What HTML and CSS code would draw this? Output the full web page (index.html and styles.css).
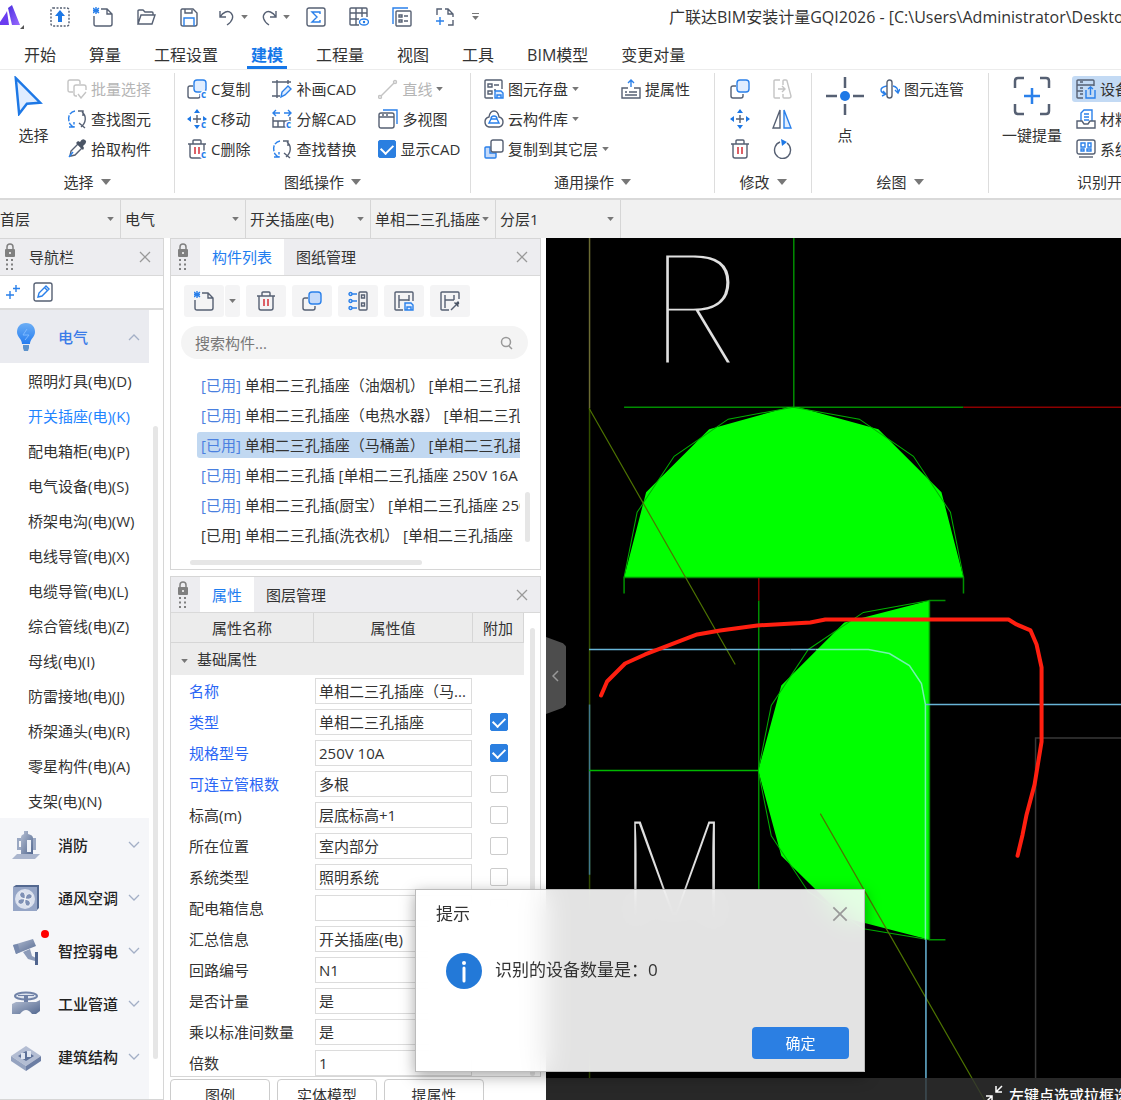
FILE: index.html
```html
<!DOCTYPE html>
<html lang="zh-CN">
<head>
<meta charset="utf-8">
<title>广联达BIM安装计量GQI2026</title>
<link rel="stylesheet" href="styles.css">
</head>
<body>
<svg class="defs" aria-hidden="true">
  <symbol id="i-tri" viewBox="0 0 10 6"><path class="tri" d="M0 0h10L5 6z"/></symbol>
  <symbol id="i-close" viewBox="0 0 12 12"><path class="x" d="M1 1l10 10M11 1L1 11"/></symbol>
  <symbol id="i-chev" viewBox="0 0 12 8"><path class="chev" d="M1 1l5 5 5-5"/></symbol>
  <symbol id="i-up" viewBox="0 0 20 20"><rect class="g" x="1" y="1" width="18" height="18" rx="2" stroke-dasharray="2 1.5"/><path class="fb" d="M10 3l5 6h-3v6H8V9H5z"/></symbol>
  <symbol id="i-new" viewBox="0 0 20 20"><path class="g" d="M8 2h6l5 5v10q0 2-2 2H3q-2 0-2-2V9M14 2v5h5"/><path class="b" d="M0 1l6 5M6 1L0 6M3 0v7M0 3.500h6"/></symbol>
  <symbol id="i-open" viewBox="0 0 20 20"><path class="g" d="M2 17V4q0-1 1-1h4l2 2h7q1 0 1 1v2M2 17L5 8h14l-3 9z"/></symbol>
  <symbol id="i-save" viewBox="0 0 20 20"><path class="g" d="M3 2h11l4 4v11q0 2-2 2H4q-2 0-2-2V3zM6 2v4h7V3"/><path class="b" d="M5 19v-8h10v8"/></symbol>
  <symbol id="i-undo" viewBox="0 0 20 20"><path class="g" d="M3 4v6h6M3 10C6 5 11 3 14 6s2 8-4 12"/></symbol>
  <symbol id="i-redo" viewBox="0 0 20 20"><path class="g" d="M17 4v6h-6M17 10C14 5 9 3 6 6s-2 8 4 12"/></symbol>
  <symbol id="i-sum" viewBox="0 0 20 20"><rect class="g" x="1" y="1" width="18" height="18" rx="2"/><path class="b" stroke-width="1.700" d="M14 7V5H6l5 5-5 5h8v-2"/></symbol>
  <symbol id="i-grid" viewBox="0 0 20 20"><path class="g" d="M10 18H2q-1 0-1-1V2q0-1 1-1h15q1 0 1 1v8M1 6h17M1 12h9M7 1v17M13 1v9"/><ellipse class="b" cx="15" cy="15" rx="4.500" ry="3"/><circle class="fb" cx="15" cy="15" r="1.200"/></symbol>
  <symbol id="i-list" viewBox="0 0 20 20"><path class="b" d="M1 17V1h15"/><rect class="g" x="4" y="4" width="15" height="15" rx="1"/><path class="g" d="M7 8h3v2H7zM7 13h3v2H7zM12 9h4M12 14h4"/></symbol>
  <symbol id="i-plusdoc" viewBox="0 0 20 20"><path class="g" d="M2 8V2h5M10 2h3l5 5v3M18 13v5h-5M13 2v5h5"/><path class="b" d="M5 10v8M1 14h8"/></symbol>
  <symbol id="i-cursor" viewBox="0 0 28 36"><path d="M3 2l22 22-12 1-7 9z" fill="#e0edff" stroke="#1d78e6" stroke-width="2.200"/></symbol>
  <symbol id="i-batch" viewBox="0 0 20 20"><path class="l" d="M6 13H3q-2 0-2-2V3q0-2 2-2h8q2 0 2 2v2M10 17H9q-2 0-2-2V8q0-2 2-2h8q2 0 2 2v3M11 15l3 4 5-6"/></symbol>
  <symbol id="i-find" viewBox="0 0 20 20"><path class="b" d="M8 2C2 3 0 9 3 15l3 3M2 18h5v-5" stroke-dasharray="6 1.500"/><path class="g" d="M11 2h5v5M15 3c5 4 4 11-1 15M12 14l6 5"/></symbol>
  <symbol id="i-drop" viewBox="0 0 20 20"><path class="g fw" d="M3 17l1-5 7-7 4 4-7 7-4 1z"/><path class="fg" d="M9 4l7 7 1-2-1-2q5-4 2-6t-5 2l-2-1z"/><path class="b" d="M2 18l4-5"/></symbol>
  <symbol id="i-copy" viewBox="0 0 20 20"><path class="g" d="M6 7H3Q1 7 1 9v8q0 2 2 2h8q2 0 2-2v-2"/><rect class="b lb" x="7" y="1" width="12" height="12" rx="3"/></symbol>
  <symbol id="i-move" viewBox="0 0 20 20"><path class="g" d="M10 6v8M6 10h8"/><path class="b" d="M10 1v3M10 16v3M1 10h3M16 10h3"/><path class="fb" d="M10 0l3 4H7zM10 20l3-4H7zM0 10l4-3v6zM20 10l-4-3v6z"/></symbol>
  <symbol id="i-trash" viewBox="0 0 20 20"><path class="g" d="M1 5h18M6 5V2q0-1 1-1h6q1 0 1 1v3M3 5v12q0 2 2 2h10q2 0 2-2V5"/><path d="M8 8v7M12 8v7" stroke="#d8454c" stroke-width="1.700"/></symbol>
  <symbol id="i-draw" viewBox="0 0 20 20"><path class="g" d="M5 1v18M0 3h19M0 17h8M16 1v4"/><path class="b lb" d="M9 18l1-5 6-6 3 3-6 6z"/></symbol>
  <symbol id="i-split" viewBox="0 0 20 20"><path class="g" d="M1 8v10h13M1 12h17V8M6 12v6M12 12v6"/><path class="b" d="M1 4h7M4 1L1 4l3 3M12 4h7M16 1l3 3-3 3"/></symbol>
  <symbol id="i-line" viewBox="0 0 20 20"><path class="l" d="M3 17L16 4"/><circle class="l fw" cx="2" cy="18" r="1.500"/><circle class="l fw" cx="17" cy="3" r="1.500"/></symbol>
  <symbol id="i-views" viewBox="0 0 20 20"><path class="b" d="M5 1h14v14"/><rect class="g" x="1" y="4" width="15" height="15" rx="2"/><path class="g" d="M1 8h15M4 6h2M8 6h2"/></symbol>
  <symbol id="i-store" viewBox="0 0 20 20"><path class="g" d="M9 19H2q-1 0-1-1V2q0-1 1-1h15q1 0 1 1v8M4 5h4v3H4zM10 6h5M4 12h4v3H4zM10 11h2"/><path class="b lb" d="M11 12h6l2 2v5h-8zM13 19v-3h4v3"/></symbol>
  <symbol id="i-cloud" viewBox="0 0 20 20"><path class="g" d="M5 18Q1 17 1 13t4-5q1-6 5-6t5 6q4 1 4 5t-4 5z"/><path class="b" d="M7 10q0-3 3-3t3 3zM5 14h10l-2-4H7z"/></symbol>
  <symbol id="i-floor" viewBox="0 0 20 20"><path class="b lb" d="M6 8H2q-1 0-1 1v9q0 1 1 1h9q1 0 1-1v-4H6z"/><rect class="g fw" x="7" y="1" width="12" height="12" rx="2"/></symbol>
  <symbol id="i-attr" viewBox="0 0 20 20"><path class="b" d="M10 8V1M7 4l3-3 3 3"/><path class="g" d="M7 9H1v10h18V9h-6M4 13h2M8 13h8M4 16h12"/></symbol>
  <symbol id="i-mirror" viewBox="0 0 20 20"><path class="g" d="M8 1v18H1z"/><path class="b lb" d="M12 1v18h7z"/></symbol>
  <symbol id="i-stretch" viewBox="0 0 20 20"><path class="l" d="M8 1H3Q2 1 2 2v16q0 1 1 1h5M6 10h7M10 7l3 3-3 3M11 6V2q0-1 1-1h2q1 0 1 1l4 15q0 2-2 2h-5q-1 0-1-1v-3"/></symbol>
  <symbol id="i-rotate" viewBox="0 0 20 20"><path class="g" d="M15 4a8 8.500 0 1 1-7-1"/><path class="fb" d="M9 0l6 3-5 4z"/></symbol>
  <symbol id="i-point" viewBox="0 0 38 38"><path class="g w2" d="M19 0v11M19 27v11M0 19h11M27 19h11"/><circle class="fb" cx="19" cy="19" r="5"/></symbol>
  <symbol id="i-pipe" viewBox="0 0 20 20"><path class="b" d="M7 7q-6 1-6 4t5 4M3 12l3 3-4 2M13 7q5 1 5 6M15 11l3 3 2-4"/><rect class="g fw" x="7" y="1" width="5" height="18" rx="2.500"/></symbol>
  <symbol id="i-scan" viewBox="0 0 38 38"><path class="g w2" d="M2 11V4q0-3 3-3h6M27 1h6q3 0 3 3v7M36 27v7q0 3-3 3h-6M11 37H5q-3 0-3-3v-7"/><path class="b w2" d="M19 11v16M11 19h16"/></symbol>
  <symbol id="i-device" viewBox="0 0 20 20"><path class="g" d="M7 19H2q-1 0-1-1V2q0-1 1-1h15q1 0 1 1v5M1 6h17M1 12h6M4 3h3M4 9h3M4 15h3"/><path class="b" d="M10 11v8h9v-8M14.500 16V8M12 10l2.500-2 2.500 2"/></symbol>
  <symbol id="i-mater" viewBox="0 0 20 20"><path class="b" d="M5 12V4l3-3h8v11M8 5h5M8 8h5M8 11h5"/><path class="g" d="M1 12h5l2 3h4l2-3h5v7H1z"/></symbol>
  <symbol id="i-system" viewBox="0 0 20 20"><rect class="g" x="1" y="1" width="18" height="14" rx="2"/><path class="b" d="M5 4h4v4H5zM12 4h3v4h-3zM5 10h3v2H5zM11 10h4v2h-4z"/><path class="g" d="M3 18h14"/></symbol>
  <symbol id="i-lock" viewBox="0 0 12 28"><path d="M3 6V4q0-3 3-3t3 3v2" fill="none" stroke="#808080" stroke-width="1.500"/><rect class="fk" x="1" y="6" width="10" height="8" rx="1"/><path d="M6 9v2" stroke="#fff" stroke-width="1.500"/><path class="fk" d="M2 16h2v2H2zM7 16h2v2H7zM2 20.500h2v2H2zM7 20.500h2v2H7zM2 25h2v2H2zM7 25h2v2H7z"/></symbol>
  <symbol id="i-spark" viewBox="0 0 14 14"><path class="b" d="M4 6v8M0 10h8M10 0v7M7 3.500h7"/></symbol>
  <symbol id="i-edit" viewBox="0 0 20 20"><rect class="g" x="1" y="1" width="18" height="18" rx="2"/><path class="b" d="M5 15l1-4 7-7 3 3-7 7zM12 6l2 2"/></symbol>
  <symbol id="i-tree" viewBox="0 0 20 20"><path class="b" d="M4 3h5M4 10h5M4 17h5"/><circle class="b" cx="2.500" cy="3" r="1.500"/><circle class="b" cx="2.500" cy="10" r="1.500"/><circle class="b" cx="2.500" cy="17" r="1.500"/><rect class="g" x="11" y="1" width="8" height="18" rx="1"/><path class="g" d="M13.500 4h3v3h-3zM13.500 12h3v3h-3z"/></symbol>
  <symbol id="i-hsave" viewBox="0 0 20 20"><path class="g" d="M9 19H2q-1 0-1-1V2q0-1 1-1h16q1 0 1 1v8M5 4v13M5 9h10M15 4v6"/><path class="b lb" d="M11 12h6l2 2v5h-8zM13 19v-3h4v3"/></symbol>
  <symbol id="i-hpick" viewBox="0 0 20 20"><path class="g" d="M9 19H2q-1 0-1-1V2q0-1 1-1h16q1 0 1 1v6M5 4v13M5 9h9M14 4v5"/><path class="g" d="M11 19l5-5"/><path class="fg" d="M14 12l1-1 1 1q2-3 3-1t-1 3l1 1-1 1z"/></symbol>
  <symbol id="i-search" viewBox="0 0 14 14"><circle cx="6" cy="6" r="4.500" fill="none" stroke="#999" stroke-width="1.500"/><path d="M9 10l3 3" stroke="#999" stroke-width="1.500"/></symbol>
  <linearGradient id="steel" x1="0" x2="1" y1="0" y2="1"><stop offset="0" stop-color="#b5bfd3"/><stop offset="1" stop-color="#536890"/></linearGradient>
  <linearGradient id="glow" x2="0" y2="1"><stop offset="0" stop-color="#6caef5"/><stop offset="1" stop-color="#267df0"/></linearGradient>
  <linearGradient id="brand" x2="1" y2="1"><stop offset="0" stop-color="#4b2fe0"/><stop offset="1" stop-color="#9a6bff"/></linearGradient>
</svg>

<header class="titlebar">
  <svg class="logo" viewBox="0 0 24 24"><path d="M0 20L7 6l2 14zM-2 20L6 8l0 12z" fill="#6a3cf0"/><path d="M8 3l4-3 8 20h-8z" fill="url(#brand)"/><path d="M24 20v4h-4z" fill="#555"/></svg>
  <nav class="quick" aria-label="快速访问">
    <button aria-label="上传"><svg><use href="#i-up"/></svg></button>
    <button aria-label="新建"><svg><use href="#i-new"/></svg></button>
    <button aria-label="打开"><svg><use href="#i-open"/></svg></button>
    <button aria-label="保存"><svg><use href="#i-save"/></svg></button>
    <button aria-label="撤销" class="has-menu"><svg><use href="#i-undo"/></svg><svg class="t"><use href="#i-tri"/></svg></button>
    <button aria-label="重做" class="has-menu"><svg><use href="#i-redo"/></svg><svg class="t"><use href="#i-tri"/></svg></button>
    <button aria-label="汇总"><svg><use href="#i-sum"/></svg></button>
    <button aria-label="表格"><svg><use href="#i-grid"/></svg></button>
    <button aria-label="清单"><svg><use href="#i-list"/></svg></button>
    <button aria-label="添加"><svg><use href="#i-plusdoc"/></svg></button>
    <button aria-label="更多" class="more"><svg class="t"><use href="#i-tri"/></svg></button>
  </nav>
  <h1>广联达BIM安装计量GQI2026 - [C:\Users\Administrator\Desktop</h1>
</header>

<nav class="tabs">
  <a href="#">开始</a><a href="#">算量</a><a href="#">工程设置</a><a href="#" class="on">建模</a><a href="#">工程量</a><a href="#">视图</a><a href="#">工具</a><a href="#">BIM模型</a><a href="#">变更对量</a>
</nav>

<section class="ribbon">
  <div class="group g-select">
    <div class="tools">
      <button class="big"><svg class="cursor"><use href="#i-cursor"/></svg>选择</button>
      <div class="col">
        <button disabled><svg><use href="#i-batch"/></svg>批量选择</button>
        <button><svg><use href="#i-find"/></svg>查找图元</button>
        <button><svg><use href="#i-drop"/></svg>拾取构件</button>
      </div>
    </div>
    <button class="caption">选择<svg class="t"><use href="#i-tri"/></svg></button>
  </div>
  <div class="group g-sheet">
    <div class="tools">
      <div class="col">
        <button><svg><use href="#i-copy"/><text class="sub" x="14" y="19">c</text></svg>C复制</button>
        <button><svg><use href="#i-move"/><text class="sub" x="14" y="19">c</text></svg>C移动</button>
        <button><svg><use href="#i-trash"/><text class="sub" x="14" y="19">c</text></svg>C删除</button>
      </div>
      <div class="col">
        <button><svg><use href="#i-draw"/></svg>补画CAD</button>
        <button><svg><use href="#i-split"/><text class="sub" x="14" y="19">c</text></svg>分解CAD</button>
        <button><svg><use href="#i-find"/></svg>查找替换</button>
      </div>
      <div class="col">
        <button disabled><svg><use href="#i-line"/></svg>直线<svg class="t s"><use href="#i-tri"/></svg></button>
        <button><svg><use href="#i-views"/></svg>多视图</button>
        <label><input type="checkbox" checked>显示CAD</label>
      </div>
    </div>
    <button class="caption">图纸操作<svg class="t"><use href="#i-tri"/></svg></button>
  </div>
  <div class="group g-common">
    <div class="tools">
      <div class="col">
        <button><svg><use href="#i-store"/></svg>图元存盘<svg class="t s"><use href="#i-tri"/></svg></button>
        <button><svg><use href="#i-cloud"/></svg>云构件库<svg class="t s"><use href="#i-tri"/></svg></button>
        <button class="deep"><svg><use href="#i-floor"/></svg>复制到其它层<svg class="t s"><use href="#i-tri"/></svg></button>
      </div>
      <div class="col">
        <button><svg><use href="#i-attr"/></svg>提属性</button>
      </div>
    </div>
    <button class="caption">通用操作<svg class="t"><use href="#i-tri"/></svg></button>
  </div>
  <div class="group g-edit">
    <div class="tools">
      <div class="col">
        <button aria-label="复制"><svg><use href="#i-copy"/></svg></button>
        <button aria-label="移动"><svg><use href="#i-move"/></svg></button>
        <button aria-label="删除"><svg><use href="#i-trash"/></svg></button>
      </div>
      <div class="col">
        <button aria-label="拉伸" disabled><svg><use href="#i-stretch"/></svg></button>
        <button aria-label="镜像"><svg><use href="#i-mirror"/></svg></button>
        <button aria-label="旋转"><svg><use href="#i-rotate"/></svg></button>
      </div>
    </div>
    <button class="caption">修改<svg class="t"><use href="#i-tri"/></svg></button>
  </div>
  <div class="group g-draw">
    <div class="tools">
      <button class="big"><svg><use href="#i-point"/></svg>点</button>
      <div class="col"><button><svg><use href="#i-pipe"/></svg>图元连管</button></div>
    </div>
    <button class="caption">绘图<svg class="t"><use href="#i-tri"/></svg></button>
  </div>
  <div class="group g-detect">
    <div class="tools">
      <button class="big"><svg><use href="#i-scan"/></svg>一键提量</button>
      <div class="col">
        <button class="on"><svg><use href="#i-device"/></svg>设备</button>
        <button><svg><use href="#i-mater"/></svg>材料</button>
        <button><svg><use href="#i-system"/></svg>系统</button>
      </div>
    </div>
    <button class="caption">识别开</button>
  </div>
</section>

<section class="combos">
  <label><select aria-label="楼层"><option>首层</option></select><svg class="t s"><use href="#i-tri"/></svg></label>
  <label><select aria-label="专业"><option>电气</option></select><svg class="t s"><use href="#i-tri"/></svg></label>
  <label><select aria-label="构件类型"><option>开关插座(电)</option></select><svg class="t s"><use href="#i-tri"/></svg></label>
  <label><select aria-label="构件"><option>单相二三孔插座</option></select><svg class="t s"><use href="#i-tri"/></svg></label>
  <label><select aria-label="分层"><option>分层1</option></select><svg class="t s"><use href="#i-tri"/></svg></label>
</section>

<main class="work">
  <aside class="nav panel">
    <div class="head"><svg class="lock"><use href="#i-lock"/></svg><h2>导航栏</h2><button class="close" aria-label="关闭"><svg><use href="#i-close"/></svg></button></div>
    <div class="navtools"><button aria-label="新增"><svg class="spark"><use href="#i-spark"/></svg></button><button aria-label="编辑"><svg><use href="#i-edit"/></svg></button></div>
    <div class="scroller">
      <div class="tree">
        <button class="cat open"><svg viewBox="0 0 30 30"><path d="M15 1C9 1 6 5 6 10c0 5 5 7 5 12h8c0-5 5-7 5-12 0-5-3-9-9-9z" fill="url(#glow)"/><path d="M16 7l-4 6h6l-4 5" fill="none" stroke="#7db8ff"/><path d="M12 23h6v3l-1 3h-4l-1-3z" fill="#5c92cc"/></svg><b>电气</b><svg class="c"><use href="#i-chev"/></svg></button>
        <ul>
          <li><a href="#">照明灯具(电)(D)</a></li>
          <li><a href="#" class="on">开关插座(电)(K)</a></li>
          <li><a href="#">配电箱柜(电)(P)</a></li>
          <li><a href="#">电气设备(电)(S)</a></li>
          <li><a href="#">桥架电沟(电)(W)</a></li>
          <li><a href="#">电线导管(电)(X)</a></li>
          <li><a href="#">电缆导管(电)(L)</a></li>
          <li><a href="#">综合管线(电)(Z)</a></li>
          <li><a href="#">母线(电)(I)</a></li>
          <li><a href="#">防雷接地(电)(J)</a></li>
          <li><a href="#">桥架通头(电)(R)</a></li>
          <li><a href="#">零星构件(电)(A)</a></li>
          <li><a href="#">支架(电)(N)</a></li>
        </ul>
        <button class="cat"><svg viewBox="0 0 30 30"><path d="M6 24h23l-5 5H1z" fill="#aab5cd"/><path d="M10 24V7q0-2 3-3V1h4v3q5 1 5 4v16z" fill="url(#steel)"/><path d="M16 10h4v12h-4z" fill="#edf1f8"/><path d="M6 8h4v3H8v6h2v3H6zM22 8h3v12h-3z" fill="#9aa8c3"/></svg><b>消防</b><svg class="c"><use href="#i-chev"/></svg></button>
        <button class="cat"><svg viewBox="0 0 30 30"><path d="M2 4l3-2h23v23l-3 3H2z" fill="#536890"/><path d="M2 4h24v24H2z" fill="#95a5c6"/><circle cx="14" cy="16" r="10" fill="#dbe1ee"/><path d="M14 16q-8-2-4-7 5-1 4 7 2-8 7-4 1 5-7 4 8 2 4 7-5 1-4-7-2 8-7 4-1-5 7-4" fill="#7e90b5" stroke="#fff" stroke-width=".7"/></svg><b>通风空调</b><svg class="c"><use href="#i-chev"/></svg></button>
        <button class="cat dot"><svg viewBox="0 0 30 30"><path d="M2 9l20-6 3 7-20 8z" fill="url(#steel)"/><path d="M2 9l5-1 2 8-4 2z" fill="#7789ad"/><path d="M12 16l7-3 2 7 4 2-1 3-7-2z" fill="#8c9bb9"/><path d="M24 16h3v13h-3z" fill="#4f648e"/></svg><b>智控弱电</b><svg class="c"><use href="#i-chev"/></svg></button>
        <button class="cat"><svg viewBox="0 0 30 30"><ellipse cx="15" cy="7" rx="11" ry="3.500" fill="#dfe4ee" stroke="#7183a8" stroke-width="2"/><path d="M13 7h4v7h-4zM7 6h16v1H7z" fill="#6d7fa5"/><path d="M1 15l4-2h20l4-2v11l-4 3h-4q-6-8-12 0H1z" fill="url(#steel)"/></svg><b>工业管道</b><svg class="c"><use href="#i-chev"/></svg></button>
        <button class="cat"><svg viewBox="0 0 30 30"><path d="M0 14L15 4l15 10-15 10z" fill="#b3bdd3"/><path d="M0 14l15 10v5L0 19z" fill="#95a3c0"/><path d="M30 14L15 24v5l15-10z" fill="#6c7ea4"/><path d="M7 14l8-5 8 5-8 5z" fill="#5c7098"/><path d="M10 11h4v6h-4zM16 9h4v6h-4z" fill="#dfe5f0"/></svg><b>建筑结构</b><svg class="c"><use href="#i-chev"/></svg></button>
        <button class="cat" aria-label="更多专业"><svg viewBox="0 0 30 30"><path d="M1 20l12 0 14 10H8z" fill="#536890"/></svg></button>
      </div>
      <i class="bar"></i>
    </div>
  </aside>

  <div class="middle">
    <section class="panel comps">
      <div class="head"><svg class="lock"><use href="#i-lock"/></svg><button class="tab on">构件列表</button><button class="tab">图纸管理</button><button class="close" aria-label="关闭"><svg><use href="#i-close"/></svg></button></div>
      <div class="bartools">
        <span class="splitbtn"><button aria-label="新建构件"><svg><use href="#i-new"/></svg></button><button class="arrow" aria-label="新建菜单"><svg class="t s"><use href="#i-tri"/></svg></button></span>
        <button aria-label="删除"><svg><use href="#i-trash"/></svg></button>
        <button aria-label="复制" class="deep"><svg><use href="#i-copy"/></svg></button>
        <button aria-label="层级"><svg><use href="#i-tree"/></svg></button>
        <button aria-label="存盘"><svg><use href="#i-hsave"/></svg></button>
        <button aria-label="提取"><svg><use href="#i-hpick"/></svg></button>
      </div>
      <label class="search"><input type="text" placeholder="搜索构件..." aria-label="搜索构件"><svg><use href="#i-search"/></svg></label>
      <div class="listwrap">
        <ul class="list">
          <li><em>[已用]</em> 单相二三孔插座（油烟机） [单相二三孔插座</li>
          <li><em>[已用]</em> 单相二三孔插座（电热水器） [单相二三孔插座</li>
          <li class="on"><em>[已用]</em> 单相二三孔插座（马桶盖） [单相二三孔插座</li>
          <li><em>[已用]</em> 单相二三孔插 [单相二三孔插座 250V 16A</li>
          <li><em>[已用]</em> 单相二三孔插(厨宝） [单相二三孔插座 250V</li>
          <li>[已用] 单相二三孔插(洗衣机） [单相二三孔插座</li>
        </ul>
        <i class="bar"></i>
      </div>
      <i class="hbar"></i>
    </section>

    <section class="panel props">
      <div class="head"><svg class="lock"><use href="#i-lock"/></svg><button class="tab on">属性</button><button class="tab">图层管理</button><button class="close" aria-label="关闭"><svg><use href="#i-close"/></svg></button></div>
      <div class="tablewrap">
        <table>
          <thead><tr><th class="c1">属性名称</th><th class="c2">属性值</th><th class="c3">附加</th></tr></thead>
          <tbody>
            <tr class="sec"><th colspan="3"><svg class="t s"><use href="#i-tri"/></svg>基础属性</th></tr>
            <tr class="key"><td><label for="p1">名称</label></td><td><input id="p1" type="text" value="单相二三孔插座（马..."></td><td></td></tr>
            <tr class="key"><td><label for="p2">类型</label></td><td><input id="p2" type="text" value="单相二三孔插座"></td><td><input type="checkbox" aria-label="附加类型" checked></td></tr>
            <tr class="key"><td><label for="p3">规格型号</label></td><td><input id="p3" type="text" value="250V 10A"></td><td><input type="checkbox" aria-label="附加规格型号" checked></td></tr>
            <tr class="key"><td><label for="p4">可连立管根数</label></td><td><input id="p4" type="text" value="多根"></td><td><input type="checkbox" aria-label="附加可连立管根数"></td></tr>
            <tr><td><label for="p5">标高(m)</label></td><td><input id="p5" type="text" value="层底标高+1"></td><td><input type="checkbox" aria-label="附加标高"></td></tr>
            <tr><td><label for="p6">所在位置</label></td><td><input id="p6" type="text" value="室内部分"></td><td><input type="checkbox" aria-label="附加所在位置"></td></tr>
            <tr><td><label for="p7">系统类型</label></td><td><input id="p7" type="text" value="照明系统"></td><td><input type="checkbox" aria-label="附加系统类型"></td></tr>
            <tr><td><label for="p8">配电箱信息</label></td><td><input id="p8" type="text" value=""></td><td><input type="checkbox" aria-label="附加配电箱信息"></td></tr>
            <tr><td><label for="p9">汇总信息</label></td><td><input id="p9" type="text" value="开关插座(电)"></td><td><input type="checkbox" aria-label="附加汇总信息"></td></tr>
            <tr><td><label for="p10">回路编号</label></td><td><input id="p10" type="text" value="N1"></td><td><input type="checkbox" aria-label="附加回路编号"></td></tr>
            <tr><td><label for="p11">是否计量</label></td><td><input id="p11" type="text" value="是"></td><td></td></tr>
            <tr><td><label for="p12">乘以标准间数量</label></td><td><input id="p12" type="text" value="是"></td><td></td></tr>
            <tr><td><label for="p13">倍数</label></td><td><input id="p13" type="text" value="1"></td><td></td></tr>
          </tbody>
        </table>
        <i class="bar"></i>
      </div>
    </section>
    <div class="bottom"><button>图例</button><button>实体模型</button><button>提属性</button></div>
  </div>

  <section class="canvas">
    <svg class="drawing" viewBox="546 239 575 861" preserveAspectRatio="xMinYMin slice">
      <g fill="none" stroke-width="1.500">
        <path d="M589.500 239V409" stroke="#6b6b33"/>
        <path d="M589.500 409V1078" stroke="#334d00"/>
        <path d="M589.500 705V875" stroke="#40798c"/>
        <path d="M793.500 239V408M624 408H963M758.500 601V890" stroke="#008c00"/>
        <path d="M963 408H1121M758.500 578V601" stroke="#8c0000"/>
      </g>
      <path fill="#0f0" d="M624 578l22-85 63-63 79-22h10l80 22 63 63 22 85zM929 601l-85 22-63 63-23 85 23 85 63 62 85 22z"/>
      <g fill="none">
        <path stroke="#00b000" d="M624 578l13-65 37-56 54-37 65-12 66 12 54 37 37 56 13 65M929 601l-66 12-55 37-37 56-13 65 13 65 37 56 55 37 66 11"/>
        <path stroke="#009000" stroke-width="1.500" d="M624 594V578H963V594M945 601H929V940H945"/>
        <path stroke="#00b800" stroke-width="1.500" d="M589 771H758"/>
        <path stroke="#4d7300" stroke-width="1.200" d="M589 409L735 665M820 814L984 1100"/>
        <path stroke="#67b4d6" stroke-width="1.500" d="M589 650H790M925 705H1121M925.500 940V1100"/>
        <path stroke="#73f2b0" stroke-width="1.500" d="M815 650H868L889 654 909 666 921 684 925 705V940"/>
        <path stroke="#67b4d6" stroke-width="1.500" d="M790 650H815"/>
        <path stroke="#383838" stroke-width="1.500" d="M1121 738.500H1035V1078"/>
      </g>
      <text class="cad" x="648" y="365">R</text>
      <text class="cad" x="616" y="930">M</text>
      <path fill="none" stroke="#ff1f10" stroke-width="4" stroke-linejoin="round" stroke-linecap="round" d="M601 696l6-14 18-18 20-9 26-10 26-10 23-4 37-5 53-3 15-3H1008l8 5 14 6 6 14 5 23v74l-7 43-8 30-4 20-5 21"/>
    </svg>
    <button class="fold" aria-label="收起"><svg viewBox="0 0 8 12"><path d="M6 1L1 6l5 5" fill="none" stroke="#999" stroke-width="1.500"/></svg></button>
    <footer class="status"><svg viewBox="0 0 18 18"><path d="M17 1l-6 6M11 1v6h6M1 17l6-6M1 11h6v6" fill="none" stroke="#fff" stroke-width="1.500"/></svg>左键点选或拉框选</footer>
  </section>
</main>

<div class="dialog" role="dialog" aria-labelledby="dlg">
  <div class="dhead"><h2 id="dlg">提示</h2><button aria-label="关闭"><svg><use href="#i-close"/></svg></button></div>
  <div class="dbody"><svg viewBox="0 0 36 36"><circle cx="18" cy="18" r="18" fill="#2379d8"/><circle cx="18" cy="10" r="2" fill="#fff"/><path d="M18 15v13" stroke="#fff" stroke-width="3" stroke-linecap="round"/></svg><p>识别的设备数量是：0</p></div>
  <div class="dfoot"><button>确定</button></div>
</div>
</body>
</html>
```
FILE: styles.css
```css
* { box-sizing: border-box; }
html, body { height: 100%; }
html { overflow: hidden; }
body {
  margin: 0;
  display: flex;
  flex-direction: column;
  overflow: hidden;
  background: #fff;
  color: #333;
  font: 15px/20px "Open Sans", "Noto Sans CJK SC", sans-serif;
  white-space: nowrap;
}
button, input, select { font: inherit; color: inherit; margin: 0; padding: 0; border: 0; background: none; }
button { display: flex; align-items: center; white-space: nowrap; }
h1, h2, p, ul { margin: 0; padding: 0; font-size: 15px; font-weight: 400; list-style: none; }
a { color: inherit; text-decoration: none; }
svg { display: block; flex: none; width: 20px; height: 20px; }
.defs { position: absolute; width: 0; height: 0; }

/* icon strokes and fills */
.g, .b, .l { fill: none; stroke-width: 1.4; }
.g { stroke: #566073; }
.b { stroke: #2a80ea; }
.l { stroke: #c4c4c4; }
.w2 { stroke-width: 2.5; }
.fb { fill: #1d78e6; }
.fg { fill: #4a5465; }
.fk { fill: #808080; }
.lb { fill: var(--tone, #e0edff); }
.fw { fill: #fff; }
.deep { --tone: #c4dafa; }
.sub { fill: #2a80ea; stroke: #fff; stroke-width: 3px; paint-order: stroke; font-size: 10px; font-weight: 700; }
.tri { fill: #777; }
.x { fill: none; stroke: #999; stroke-width: 1.3; }
.chev { fill: none; stroke: #a3afc6; stroke-width: 1.3; }
svg.t { width: 10px; height: 6px; }
svg.t.s { width: 7px; height: 4px; }

input[type="checkbox"] {
  appearance: none;
  display: block;
  width: 18px;
  height: 18px;
  border: 1px solid #ccc;
  border-radius: 2px;
  background: #fff;
}
input[type="checkbox"]:checked { border-color: #2b7fe0; background: #2b7fe0; }
input[type="checkbox"]:checked::after {
  content: "";
  display: block;
  width: 6px;
  height: 10px;
  margin: 1px auto;
  border: solid #fff;
  border-width: 0 2px 2px 0;
  transform: rotate(45deg);
}

/* title bar */
.titlebar { flex: 0 0 33px; display: flex; align-items: center; overflow: hidden; }
.titlebar h1 { font-size: 16px; }
.titlebar .logo { width: 24px; height: 24px; margin-right: 26px; }
.quick { display: flex; align-items: center; gap: 23px; flex: 0 0 619px; }
.quick .has-menu { gap: 4px; margin: 0 -7px 0 -5px; }
.quick svg.t { width: 7px; height: 4px; }
.quick .more { margin-left: -6px; border-top: 1px solid #777; padding-top: 2px; }

/* ribbon tabs */
.tabs { flex: 0 0 37px; display: flex; gap: 33px; padding-left: 24px; border-bottom: 1px solid #ececec; font-size: 16px; }
.tabs a { padding-top: 12px; }
.tabs .on { color: #1677e8; font-weight: 700; margin: 0 -4px; padding-left: 4px; padding-right: 4px; border-bottom: 3px solid #1677e8; }

/* ribbon */
.ribbon { flex: 0 0 130px; display: flex; padding: 3px 0 5px; overflow: hidden; border-bottom: 2px solid #d9d9d9; }
.group { flex: none; display: flex; flex-direction: column; justify-content: space-between; border-right: 1px solid #ddd; }
.tools { display: flex; padding-top: 3px; }
.col { display: flex; flex-direction: column; gap: 4px; }
.col > button, .col > label { display: flex; align-items: center; gap: 4px; height: 26px; }
.ribbon button:disabled { color: #b5b5b5; }
.ribbon button:disabled .tri { fill: #bbb; }
.caption { align-self: center; gap: 7px; height: 22px; }
.big { flex-direction: column; align-self: flex-start; gap: 9px; }
.big svg { width: 38px; height: 40px; }
.g-select { width: 175px; }
.g-select .big { width: 67px; }
.g-select .cursor { margin-right: 12px; }
.g-sheet { width: 296px; }
.g-sheet .tools { padding-left: 12px; gap: 22px; }
.g-common { width: 244px; }
.g-common .tools { padding-left: 13px; gap: 12px; }
.g-edit { width: 97px; }
.g-edit .tools { padding-left: 15px; gap: 22px; }
.g-draw { width: 177px; }
.g-draw .tools { padding-left: 14px; gap: 16px; }
.g-detect { flex: 1 0 120px; border: 0; }
.g-detect .tools { padding-left: 12px; gap: 9px; }
.g-detect .big { width: 62px; }
.g-detect .col > button { padding: 0 4px; }
.g-detect .on { background: #c3daf4; border-radius: 3px; }
.g-detect .caption { align-self: flex-start; margin-left: 88px; }

/* drop-down row */
.combos { flex: 0 0 38px; display: flex; background: #f1f1f1; }
.combos label { flex: 0 0 125px; display: flex; align-items: center; padding: 0 6px 0 4px; border-right: 1px solid #d6d6d6; }
.combos label:first-child { flex-basis: 121px; padding-left: 0; }
.combos select { flex: 1; min-width: 0; appearance: none; }

/* work area */
.work { flex: 1; min-height: 0; display: flex; }
.panel { border: 1px solid #d6d6d6; background: #fff; overflow: hidden; }
.head { flex: none; height: 37px; display: flex; align-items: stretch; padding: 0 12px 0 6px; background: #ededf0; border-bottom: 1px solid #d9d9d9; }
.head .lock { width: 12px; height: 28px; margin-top: 4px; }
.head h2 { align-self: center; margin-left: 13px; }
.head .close { margin-left: auto; }
.close svg { width: 12px; height: 12px; }
.tab { padding: 0 12px; }
.tab.on { background: #fff; color: #1f7ef0; margin-left: 11px; }
.bar { display: block; flex: none; width: 5px; border-radius: 3px; background: #e6e6e6; }

.nav { flex: 0 0 164px; display: flex; flex-direction: column; border-left: 0; }
.nav .head { padding-left: 4px; }
.navtools { flex: none; display: flex; gap: 13px; height: 34px; padding-left: 6px; border-bottom: 2px solid #dcdcdc; }
.navtools .spark { width: 14px; height: 14px; }
.scroller { flex: 1; min-height: 0; display: flex; gap: 4px; }
.scroller .bar { align-self: stretch; margin: 116px 5px 40px 0; }
.tree { flex: 1; }
.cat { position: relative; width: 100%; height: 53px; padding: 0 9px 0 11px; background: #f5f6f9; color: #222; }
.cat > svg { width: 30px; height: 30px; }
.cat b { margin-left: 17px; font-weight: 500; }
.cat .c { width: 12px; height: 8px; margin-left: auto; }
.cat.open { background: #eaebf0; color: #3a7be8; }
.cat.open .c { transform: rotate(180deg); }
.cat.dot::after { content: ""; position: absolute; left: 41px; top: 6px; width: 8px; height: 8px; border-radius: 50%; background: #f00; }
.tree li { height: 35px; padding: 8px 0 0 28px; }
.tree .on { color: #1f85ff; }

.middle { flex: 0 0 371px; min-width: 0; margin: 0 5px 0 6px; display: flex; flex-direction: column; min-height: 0; }
.comps { flex: 0 0 332px; display: flex; flex-direction: column; }
.bartools { display: flex; gap: 6px; padding: 9px 0 9px 13px; }
.bartools button { width: 40px; height: 32px; justify-content: center; border-radius: 3px; background: #f4f4f5; }
.bartools .splitbtn { display: flex; gap: 1px; }
.bartools .arrow { width: 15px; }
.search { display: flex; align-items: center; height: 33px; margin: 0 12px 0 10px; padding: 0 14px; border-radius: 17px; background: #f4f4f4; }
.search input { flex: 1; min-width: 0; }
.search input::placeholder { color: #777; opacity: 1; }
.search svg { width: 14px; height: 14px; }
.listwrap { display: flex; margin-top: 13px; height: 180px; }
.list { flex: 1; min-width: 0; margin: 0 5px 0 26px; }
.list li { height: 26px; margin-bottom: 4px; padding: 3px 0 3px 4px; overflow: hidden; border-radius: 3px 0 0 3px; white-space: pre; }
.list .on { background: #c1d8f1; }
.list em { font-style: normal; color: #4a80e0; }
.listwrap .bar { margin: 120px 10px 10px 0; }
.hbar { display: block; width: 232px; height: 5px; margin: 8px 0 0 19px; border-radius: 3px; background: #e6e6e6; }

.props { flex: 1; min-height: 0; margin-top: 6px; display: flex; flex-direction: column; }
.props .head { height: 36px; }
.tablewrap { flex: 1; min-height: 0; display: flex; overflow: hidden; }
.tablewrap .bar { margin: 15px 5px 0 6px; }
table { flex: 1; min-width: 0; align-self: flex-start; border-collapse: separate; border-spacing: 0; table-layout: fixed; }
th { font-weight: 400; padding: 0; background: #ececec; }
thead th { height: 30px; border-right: 1px solid #d6d6d6; border-bottom: 1px solid #d6d6d6; }
.c1 { width: 143px; }
.c2 { width: 159px; }
.sec th { height: 32px; padding-left: 10px; text-align: left; }
.sec svg { display: inline-block; margin-right: 9px; vertical-align: middle; }
td { height: 31px; padding: 0; }
td:first-child { padding-left: 18px; }
td:nth-child(2) { padding-left: 1px; }
td input[type="text"] { display: block; width: 157px; height: 26px; padding: 0 3px; border: 1px solid #dcdcdc; }
td input[type="checkbox"] { margin: 0 auto; }
.key label { color: #2a66f5; }
.bottom { flex: 0 0 23px; display: flex; gap: 7px; padding-top: 2px; overflow: hidden; }
.bottom button { flex: 0 0 100px; height: 32px; justify-content: center; border: 1px solid #ccc; border-radius: 4px; background: #fff; }

/* drawing area */
.canvas { position: relative; flex: 1; min-width: 0; overflow: hidden; background: #000; }
.drawing { position: absolute; inset: 0; width: 100%; height: 100%; }
.cad { fill: #e0e0e0; stroke: #000; stroke-width: 3px; font-family: "Noto Sans CJK SC", sans-serif; font-weight: 100; font-size: 152px; }
.fold { position: absolute; left: 0; top: 399px; width: 20px; height: 77px; padding-left: 6px; background: #4d4d4d; clip-path: polygon(0 0, 85% 8%, 100% 12%, 100% 88%, 85% 92%, 0 100%); }
.fold svg { width: 8px; height: 12px; }
.status { position: absolute; left: 0; right: 0; bottom: 0; height: 22px; padding: 7px 0 0 439px; display: flex; gap: 6px; color: #fff; font-weight: 500; background: rgba(50, 50, 50, .8); }
.status svg { width: 18px; height: 18px; }

/* message box */
.dialog { position: absolute; left: 415px; top: 889px; width: 450px; height: 183px; padding: 0 15px 12px 20px; display: flex; flex-direction: column; border: 1px solid #bbb; background: rgba(255, 255, 255, .89); backdrop-filter: blur(14px); box-shadow: 0 4px 14px rgba(0, 0, 0, .35); }
.dhead { display: flex; justify-content: space-between; height: 48px; }
.dhead h2 { align-self: center; font-size: 17px; }
.dhead svg { width: 16px; height: 16px; margin-right: 1px; }
.dialog .x { stroke: #777; stroke-width: 1; }
.dbody { display: flex; align-items: flex-start; gap: 13px; flex: 1; padding: 15px 0 0 10px; }
.dbody svg { width: 36px; height: 36px; }
.dbody p { padding-top: 7px; font-size: 17px; }
.dfoot { display: flex; justify-content: flex-end; }
.dfoot button { width: 97px; height: 32px; justify-content: center; border-radius: 4px; background: #2b7fe3; color: #fff; }
```
